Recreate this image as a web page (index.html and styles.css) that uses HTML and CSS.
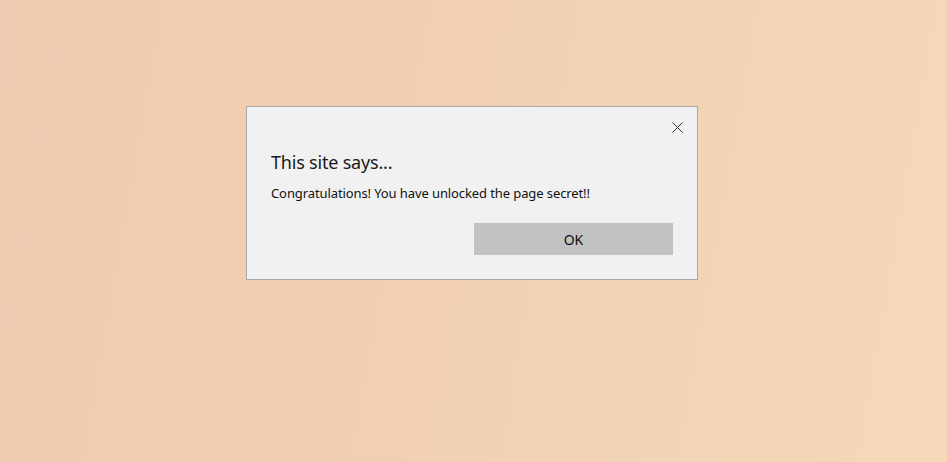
FILE: index.html
```html
<!DOCTYPE html>
<html>
<head>
<meta charset="utf-8">
<link rel="stylesheet" href="styles.css">
</head>
<body>
<div class="dialog">
  <button class="close" aria-label="Close">
    <svg width="11" height="11" viewBox="0 0 11 11"><path d="M0.5 0.5L10.5 10.5M10.5 0.5L0.5 10.5" stroke="#333" stroke-width="1" fill="none"/></svg>
  </button>
  <h1 class="title">This site says...</h1>
  <p class="message">Congratulations! You have unlocked the page secret!!</p>
  <div class="actions">
    <button class="ok">OK</button>
  </div>
</div>
</body>
</html>
```
FILE: styles.css
```css
html, body {
  margin: 0;
  height: 100%;
}
body {
  background: linear-gradient(100deg, #f0cab0 0%, #f2d0b4 50%, #f5d9b8 100%);
  padding: 106px 0 0 246px;
  box-sizing: border-box;
  font-family: "Noto Sans", "Open Sans", sans-serif;
}
.dialog {
  position: relative;
  width: 402px;
  background: #f1f1f1;
  border: 1px solid #a8a8a8;
  padding: 41px 24px 24px 24px;
  box-sizing: content-box;
  display: flex;
  flex-direction: column;
}
.close {
  position: absolute;
  top: 15px;
  right: 14px;
  width: 11px;
  height: 11px;
  padding: 0;
  border: 0;
  background: none;
  display: flex;
}
.title {
  margin: 0;
  font-size: 18px;
  line-height: 28px;
  font-weight: 400;
  color: #1a1a1a;
  letter-spacing: -0.2px;
}
.message {
  margin: 8px 0 0 0;
  font-size: 13px;
  line-height: 18px;
  color: #111;
  letter-spacing: -0.1px;
}
.actions {
  display: flex;
  justify-content: flex-end;
  margin-top: 21px;
}
.ok {
  width: 199px;
  height: 32px;
  border: 0;
  background: #c2c2c2;
  font-family: inherit;
  font-size: 14px;
  color: #111;
  padding: 0;
}
```
